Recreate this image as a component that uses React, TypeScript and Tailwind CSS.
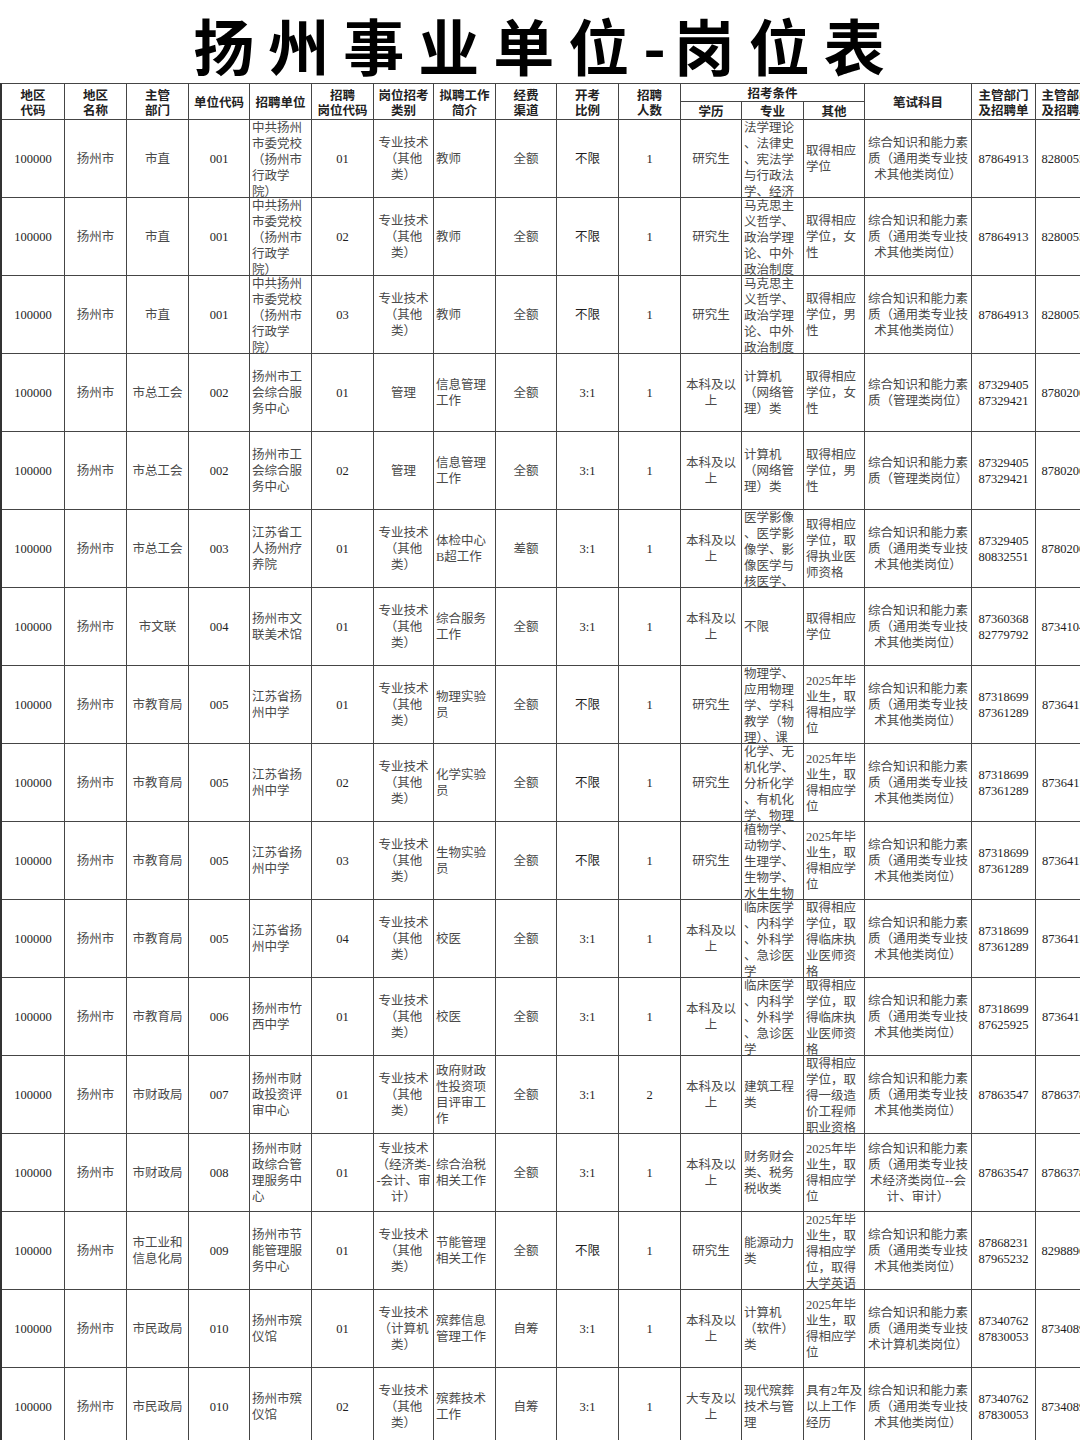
import React from 'react';

type Row = {
  code: string;
  area: string;
  dept: string[];
  unitCode: string;
  unit: string[];
  post: string;
  cat: string[];
  intro: string[];
  fund: string;
  ratio: string;
  num: string;
  edu: string[];
  major: string[];
  other: string[];
  exam: string[];
  phone1: string[];
  phone2: string;
};

const EXAM_OTHER = ['综合知识和能力素', '质（通用类专业技', '术其他类岗位）'];
const EXAM_MGMT = ['综合知识和能力素', '质（管理类岗位）'];
const CAT_OTHER = ['专业技术', '（其他', '类）'];
const BK = ['本科及以', '上'];
const MAKS = ['马克思主', '义哲学、', '政治学理', '论、中外', '政治制度'];
const GRAD25 = ['2025年毕', '业生，取', '得相应学', '位'];
const CLIN = ['临床医学', '、内科学', '、外科学', '、急诊医', '学'];
const CLIN_OTHER = ['取得相应', '学位，取', '得临床执', '业医师资', '格'];

const rows: Row[] = [
  { code: '100000', area: '扬州市', dept: ['市直'], unitCode: '001', unit: ['中共扬州', '市委党校', '（扬州市', '行政学', '院）'], post: '01', cat: CAT_OTHER, intro: ['教师'], fund: '全额', ratio: '不限', num: '1', edu: ['研究生'], major: ['法学理论', '、法律史', '、宪法学', '与行政法', '学、经济'], other: ['取得相应', '学位'], exam: EXAM_OTHER, phone1: ['87864913'], phone2: '82800552' },
  { code: '100000', area: '扬州市', dept: ['市直'], unitCode: '001', unit: ['中共扬州', '市委党校', '（扬州市', '行政学', '院）'], post: '02', cat: CAT_OTHER, intro: ['教师'], fund: '全额', ratio: '不限', num: '1', edu: ['研究生'], major: MAKS, other: ['取得相应', '学位，女', '性'], exam: EXAM_OTHER, phone1: ['87864913'], phone2: '82800552' },
  { code: '100000', area: '扬州市', dept: ['市直'], unitCode: '001', unit: ['中共扬州', '市委党校', '（扬州市', '行政学', '院）'], post: '03', cat: CAT_OTHER, intro: ['教师'], fund: '全额', ratio: '不限', num: '1', edu: ['研究生'], major: MAKS, other: ['取得相应', '学位，男', '性'], exam: EXAM_OTHER, phone1: ['87864913'], phone2: '82800552' },
  { code: '100000', area: '扬州市', dept: ['市总工会'], unitCode: '002', unit: ['扬州市工', '会综合服', '务中心'], post: '01', cat: ['管理'], intro: ['信息管理', '工作'], fund: '全额', ratio: '3:1', num: '1', edu: BK, major: ['计算机', '（网络管', '理）类'], other: ['取得相应', '学位，女', '性'], exam: EXAM_MGMT, phone1: ['87329405', '87329421'], phone2: '87802000' },
  { code: '100000', area: '扬州市', dept: ['市总工会'], unitCode: '002', unit: ['扬州市工', '会综合服', '务中心'], post: '02', cat: ['管理'], intro: ['信息管理', '工作'], fund: '全额', ratio: '3:1', num: '1', edu: BK, major: ['计算机', '（网络管', '理）类'], other: ['取得相应', '学位，男', '性'], exam: EXAM_MGMT, phone1: ['87329405', '87329421'], phone2: '87802000' },
  { code: '100000', area: '扬州市', dept: ['市总工会'], unitCode: '003', unit: ['江苏省工', '人扬州疗', '养院'], post: '01', cat: CAT_OTHER, intro: ['体检中心', 'B超工作'], fund: '差额', ratio: '3:1', num: '1', edu: BK, major: ['医学影像', '、医学影', '像学、影', '像医学与', '核医学、'], other: ['取得相应', '学位，取', '得执业医', '师资格'], exam: EXAM_OTHER, phone1: ['87329405', '80832551'], phone2: '87802000' },
  { code: '100000', area: '扬州市', dept: ['市文联'], unitCode: '004', unit: ['扬州市文', '联美术馆'], post: '01', cat: CAT_OTHER, intro: ['综合服务', '工作'], fund: '全额', ratio: '3:1', num: '1', edu: BK, major: ['不限'], other: ['取得相应', '学位'], exam: EXAM_OTHER, phone1: ['87360368', '82779792'], phone2: '87341040' },
  { code: '100000', area: '扬州市', dept: ['市教育局'], unitCode: '005', unit: ['江苏省扬', '州中学'], post: '01', cat: CAT_OTHER, intro: ['物理实验', '员'], fund: '全额', ratio: '不限', num: '1', edu: ['研究生'], major: ['物理学、', '应用物理', '学、学科', '教学（物', '理）、课'], other: GRAD25, exam: EXAM_OTHER, phone1: ['87318699', '87361289'], phone2: '87364111' },
  { code: '100000', area: '扬州市', dept: ['市教育局'], unitCode: '005', unit: ['江苏省扬', '州中学'], post: '02', cat: CAT_OTHER, intro: ['化学实验', '员'], fund: '全额', ratio: '不限', num: '1', edu: ['研究生'], major: ['化学、无', '机化学、', '分析化学', '、有机化', '学、物理'], other: GRAD25, exam: EXAM_OTHER, phone1: ['87318699', '87361289'], phone2: '87364111' },
  { code: '100000', area: '扬州市', dept: ['市教育局'], unitCode: '005', unit: ['江苏省扬', '州中学'], post: '03', cat: CAT_OTHER, intro: ['生物实验', '员'], fund: '全额', ratio: '不限', num: '1', edu: ['研究生'], major: ['植物学、', '动物学、', '生理学、', '生物学、', '水生生物'], other: GRAD25, exam: EXAM_OTHER, phone1: ['87318699', '87361289'], phone2: '87364111' },
  { code: '100000', area: '扬州市', dept: ['市教育局'], unitCode: '005', unit: ['江苏省扬', '州中学'], post: '04', cat: CAT_OTHER, intro: ['校医'], fund: '全额', ratio: '3:1', num: '1', edu: BK, major: CLIN, other: CLIN_OTHER, exam: EXAM_OTHER, phone1: ['87318699', '87361289'], phone2: '87364111' },
  { code: '100000', area: '扬州市', dept: ['市教育局'], unitCode: '006', unit: ['扬州市竹', '西中学'], post: '01', cat: CAT_OTHER, intro: ['校医'], fund: '全额', ratio: '3:1', num: '1', edu: BK, major: CLIN, other: CLIN_OTHER, exam: EXAM_OTHER, phone1: ['87318699', '87625925'], phone2: '87364111' },
  { code: '100000', area: '扬州市', dept: ['市财政局'], unitCode: '007', unit: ['扬州市财', '政投资评', '审中心'], post: '01', cat: CAT_OTHER, intro: ['政府财政', '性投资项', '目评审工', '作'], fund: '全额', ratio: '3:1', num: '2', edu: BK, major: ['建筑工程', '类'], other: ['取得相应', '学位，取', '得一级造', '价工程师', '职业资格'], exam: EXAM_OTHER, phone1: ['87863547'], phone2: '87863780' },
  { code: '100000', area: '扬州市', dept: ['市财政局'], unitCode: '008', unit: ['扬州市财', '政综合管', '理服务中', '心'], post: '01', cat: ['专业技术', '（经济类-', '-会计、审', '计）'], intro: ['综合治税', '相关工作'], fund: '全额', ratio: '3:1', num: '1', edu: BK, major: ['财务财会', '类、税务', '税收类'], other: GRAD25, exam: ['综合知识和能力素', '质（通用类专业技', '术经济类岗位--会', '计、审计）'], phone1: ['87863547'], phone2: '87863780' },
  { code: '100000', area: '扬州市', dept: ['市工业和', '信息化局'], unitCode: '009', unit: ['扬州市节', '能管理服', '务中心'], post: '01', cat: CAT_OTHER, intro: ['节能管理', '相关工作'], fund: '全额', ratio: '不限', num: '1', edu: ['研究生'], major: ['能源动力', '类'], other: ['2025年毕', '业生，取', '得相应学', '位，取得', '大学英语'], exam: EXAM_OTHER, phone1: ['87868231', '87965232'], phone2: '82988960' },
  { code: '100000', area: '扬州市', dept: ['市民政局'], unitCode: '010', unit: ['扬州市殡', '仪馆'], post: '01', cat: ['专业技术', '（计算机', '类）'], intro: ['殡葬信息', '管理工作'], fund: '自筹', ratio: '3:1', num: '1', edu: BK, major: ['计算机', '（软件）', '类'], other: GRAD25, exam: ['综合知识和能力素', '质（通用类专业技', '术计算机类岗位）'], phone1: ['87340762', '87830053'], phone2: '87340890' },
  { code: '100000', area: '扬州市', dept: ['市民政局'], unitCode: '010', unit: ['扬州市殡', '仪馆'], post: '02', cat: CAT_OTHER, intro: ['殡葬技术', '工作'], fund: '自筹', ratio: '3:1', num: '1', edu: ['大专及以', '上'], major: ['现代殡葬', '技术与管', '理'], other: ['具有2年及', '以上工作', '经历'], exam: EXAM_OTHER, phone1: ['87340762', '87830053'], phone2: '87340890' },
];

function Cell({ lines, left, dark }: { lines: string[]; left?: boolean; dark?: boolean }) {
  return (
    <div
      className={
        'border-r border-b border-[#454545] overflow-hidden flex flex-col [justify-content:safe_center] ' +
        (left ? 'items-start pl-[2px] ' : 'items-center ') +
        (dark ? 'text-[#1e1e1e]' : 'text-[#4a4a4a]')
      }
    >
      {lines.map((l, i) => (
        <div key={i} className="whitespace-nowrap leading-[16px]">
          {l}
        </div>
      ))}
    </div>
  );
}

function H({ lines, span }: { lines: string[]; span: string }) {
  return (
    <div className={'border-r border-b border-[#454545] overflow-hidden flex flex-col items-center justify-center ' + span}>
      {lines.map((l, i) => (
        <div key={i} className="whitespace-nowrap leading-[15px]">
          {l}
        </div>
      ))}
    </div>
  );
}

export default function App() {
  return (
    <div className="w-[1080px] h-[1440px] overflow-hidden bg-white">
      <div className="h-[83px] flex items-center justify-center pl-[12px] pt-[6px]">
        <h1 className="font-['Noto_Sans_CJK_SC',sans-serif] font-bold text-[61px] leading-[72px] tracking-[14px] text-black">
          扬州事业单位<span className="tracking-[8px]">-</span>岗位表
        </h1>
      </div>
      <div className="grid w-[1096px] grid-cols-[63px_62px_62px_61px_62px_62px_60px_62px_61px_62px_62px_61px_62px_61px_107px_64px_62px] grid-rows-[18px_18px_repeat(17,78px)] border-t border-t-[#454545] border-l-2 border-l-[#333]">
        <div className="contents font-['Noto_Sans_CJK_SC',sans-serif] font-semibold text-[12.5px] text-[#222]">
          <H span="row-span-2" lines={['地区', '代码']} />
          <H span="row-span-2" lines={['地区', '名称']} />
          <H span="row-span-2" lines={['主管', '部门']} />
          <H span="row-span-2" lines={['单位代码']} />
          <H span="row-span-2" lines={['招聘单位']} />
          <H span="row-span-2" lines={['招聘', '岗位代码']} />
          <H span="row-span-2" lines={['岗位招考', '类别']} />
          <H span="row-span-2" lines={['拟聘工作', '简介']} />
          <H span="row-span-2" lines={['经费', '渠道']} />
          <H span="row-span-2" lines={['开考', '比例']} />
          <H span="row-span-2" lines={['招聘', '人数']} />
          <H span="col-span-3" lines={['招考条件']} />
          <H span="row-span-2" lines={['笔试科目']} />
          <H span="row-span-2" lines={['主管部门', '及招聘单']} />
          <H span="row-span-2" lines={['主管部门', '及招聘单']} />
          <H span="" lines={['学历']} />
          <H span="" lines={['专业']} />
          <H span="" lines={['其他']} />
        </div>
        <div className="contents font-['Liberation_Serif','Noto_Sans_CJK_SC',serif] text-[12.5px]">
          {rows.map((r, i) => (
            <React.Fragment key={i}>
              <Cell lines={[r.code]} dark />
              <Cell lines={[r.area]} />
              <Cell lines={r.dept} />
              <Cell lines={[r.unitCode]} dark />
              <Cell lines={r.unit} left />
              <Cell lines={[r.post]} dark />
              <Cell lines={r.cat} />
              <Cell lines={r.intro} left />
              <Cell lines={[r.fund]} />
              <Cell lines={[r.ratio]} dark />
              <Cell lines={[r.num]} dark />
              <Cell lines={r.edu} />
              <Cell lines={r.major} left />
              <Cell lines={r.other} left />
              <Cell lines={r.exam} />
              <Cell lines={r.phone1} dark />
              <Cell lines={[r.phone2]} dark />
            </React.Fragment>
          ))}
        </div>
      </div>
    </div>
  );
}
